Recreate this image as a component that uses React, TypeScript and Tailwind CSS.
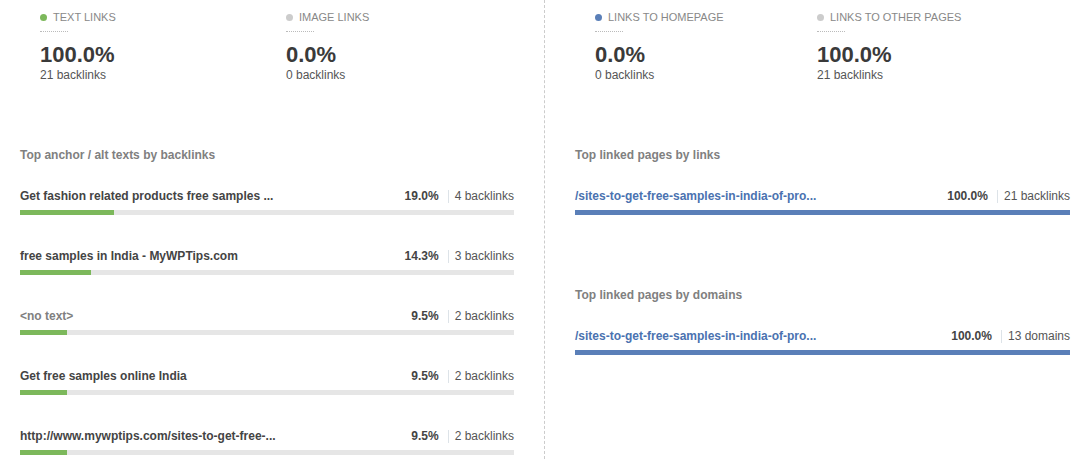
import React from "react";

const F = { fontFamily: '"Liberation Sans", Arial, sans-serif' };

function Stat({ color, label, value, sub, w }: { color: string; label: string; value: string; sub: string; w: string }) {
  return (
    <div className={w}>
      <div className="flex items-center h-[14px] text-[11px] leading-[14px] text-[#888] uppercase">
        <span className={`inline-block w-[7px] h-[7px] rounded-full mr-[6px] ${color}`} />
        {label}
      </div>
      <div className="mt-[7px] w-[28px] border-t border-dotted border-[#bbb]" />
      <div className="mt-[11px] text-[22px] leading-[24px] font-bold text-[#3a3a3a]">{value}</div>
      <div className="mt-[1px] text-[12px] leading-[14px] text-[#555]">{sub}</div>
    </div>
  );
}

function Row({
  text,
  pct,
  count,
  fill,
  bar,
  textColor,
  first,
}: {
  text: string;
  pct: number;
  count: string;
  fill: string;
  bar: string;
  textColor: string;
  first?: boolean;
}) {
  return (
    <div className={first ? "mt-[27px]" : "mt-[34px]"}>
      <div className="flex justify-between items-center h-[14px] text-[12px] leading-[14px]">
        <span className={`font-bold ${textColor}`}>{text}</span>
        <span className="flex items-center">
          <span className="font-bold text-[#444]">{pct.toFixed(1)}%</span>
          <span className="ml-[9px] pl-[6px] border-l border-[#dde3e8] text-[#555] leading-[13px]">{count}</span>
        </span>
      </div>
      <div className={`mt-[7px] h-[5px] ${bar}`}>
        <div className={`h-full ${fill}`} style={{ width: `${pct}%` }} />
      </div>
    </div>
  );
}

export default function App() {
  const anchors = [
    { t: "Get fashion related products free samples ...", p: 19.0, c: "4 backlinks", col: "text-[#444]" },
    { t: "free samples in India - MyWPTips.com", p: 14.3, c: "3 backlinks", col: "text-[#444]" },
    { t: "<no text>", p: 9.5, c: "2 backlinks", col: "text-[#808080]" },
    { t: "Get free samples online India", p: 9.5, c: "2 backlinks", col: "text-[#444]" },
    { t: "http://www.mywptips.com/sites-to-get-free-...", p: 9.5, c: "2 backlinks", col: "text-[#444]" },
  ];
  return (
    <div style={F} className="flex w-[1074px] h-[459px] bg-white overflow-hidden">
      <div className="w-[545px] shrink-0 border-r border-dashed border-[#ccc] pl-[20px] pr-[30px]">
        <div className="flex pl-[20px] pt-[10px]">
          <Stat w="w-[246px]" color="bg-[#7cb85b]" label="Text links" value="100.0%" sub="21 backlinks" />
          <Stat w="w-[200px]" color="bg-[#cccccc]" label="Image links" value="0.0%" sub="0 backlinks" />
        </div>
        <div className="mt-[66px] text-[12px] leading-[14px] font-bold text-[#808080]">
          Top anchor / alt texts by backlinks
        </div>
        {anchors.map((a, i) => (
          <Row
            key={i}
            first={i === 0}
            text={a.t}
            pct={a.p}
            count={a.c}
            fill="bg-[#7cb85b]"
            bar="bg-[#e6e6e6]"
            textColor={a.col}
          />
        ))}
      </div>
      <div className="flex-1 pl-[30px] pr-[4px]">
        <div className="flex pl-[20px] pt-[10px]">
          <Stat w="w-[222px]" color="bg-[#5a7fb8]" label="Links to homepage" value="0.0%" sub="0 backlinks" />
          <Stat w="w-[220px]" color="bg-[#cccccc]" label="Links to other pages" value="100.0%" sub="21 backlinks" />
        </div>
        <div className="mt-[66px] text-[12px] leading-[14px] font-bold text-[#808080]">Top linked pages by links</div>
        <Row
          first
          text="/sites-to-get-free-samples-in-india-of-pro..."
          pct={100}
          count="21 backlinks"
          fill="bg-[#5a7fb8]"
          bar="bg-[#e6e6e6]"
          textColor="text-[#4a72b0]"
        />
        <div className="mt-[73px] text-[12px] leading-[14px] font-bold text-[#808080]">Top linked pages by domains</div>
        <Row
          first
          text="/sites-to-get-free-samples-in-india-of-pro..."
          pct={100}
          count="13 domains"
          fill="bg-[#5a7fb8]"
          bar="bg-[#e6e6e6]"
          textColor="text-[#4a72b0]"
        />
      </div>
    </div>
  );
}
